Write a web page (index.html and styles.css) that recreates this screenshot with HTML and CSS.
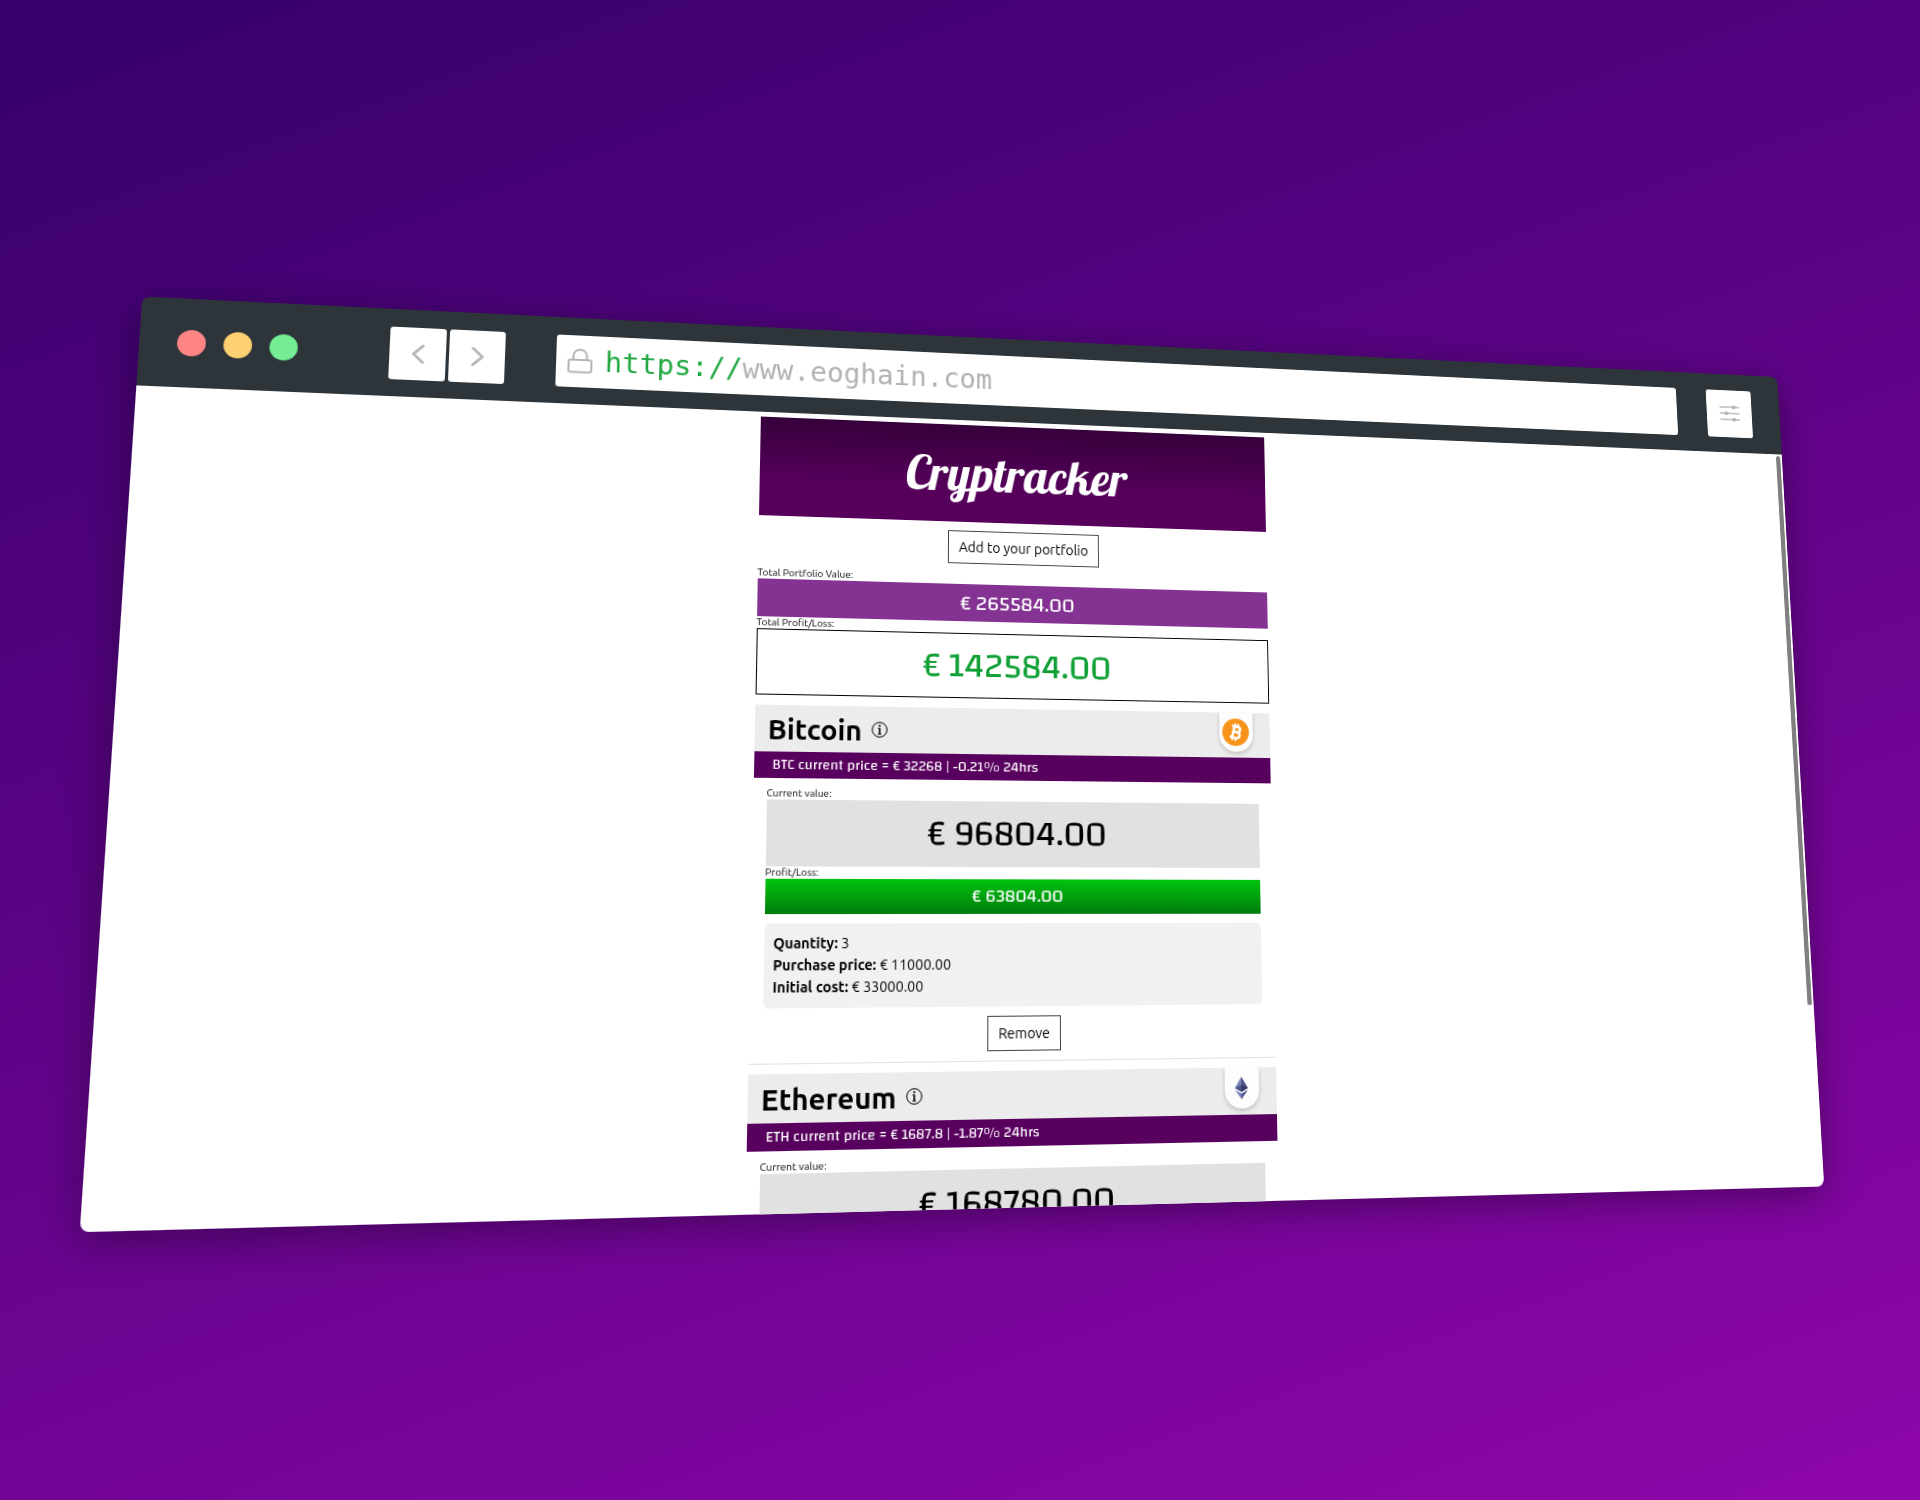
FILE: index.html
```html
<!DOCTYPE html>
<html lang="en">
<head>
<meta charset="utf-8">
<title>Cryptracker</title>
<link rel="stylesheet" href="styles.css">
</head>
<body>
<div class="browser">
  <div class="toolbar">
    <div class="lights">
      <span class="light light-close"></span>
      <span class="light light-min"></span>
      <span class="light light-max"></span>
    </div>
    <div class="nav">
      <button class="tool" type="button" aria-label="Back"><svg width="12" height="20" viewBox="0 0 12 20"><path d="M10.5 2 1.5 10.500l9 8.500"/></svg></button>
      <button class="tool" type="button" aria-label="Forward"><svg width="12" height="20" viewBox="0 0 12 20"><path d="M1.500 2l9 8.500-9 8.500"/></svg></button>
    </div>
    <label class="address">
      <svg class="lock" width="26" height="28" viewBox="0 0 26 28"><rect x="2" y="13" width="22" height="12.500" rx="2"/><path d="M6.500 13V9a6.500 6.500 0 0 1 13 0v4"/></svg>
      <span class="scheme">https://</span><input class="url" type="text" value="www.eoghain.com" aria-label="Address">
    </label>
    <button class="tool" type="button" aria-label="Settings"><svg class="sliders" width="24" height="18" viewBox="0 0 24 18"><path d="M1 2h22M1 9h22M1 16h22"/><path class="knob" d="M16.500 2h1M7.500 9h1M16.500 16h1"/></svg></button>
  </div>

  <div class="viewport">
    <main class="app">
      <header class="masthead"><h1 class="logo">Cryptracker</h1></header>
      <div class="actions"><button class="action" type="button">Add to your portfolio</button></div>

      <section class="totals">
        <p class="label">Total Portfolio Value:</p>
        <p class="amount amount-total">€ 265584.00</p>
        <p class="label">Total Profit/Loss:</p>
        <p class="amount amount-gain">€ 142584.00</p>
      </section>

      <section class="coin">
        <div class="coin-head">
          <h2 class="coin-name">Bitcoin</h2>
          <svg class="info" width="16" height="16" viewBox="0 0 16 16"><circle cx="8" cy="8" r="7.300"/><path class="stem" d="M8 6.300v6"/><path d="M6.300 6.600h1.500M6.300 12.200h3.400"/><circle class="dot" cx="8" cy="3.900" r="1"/></svg>
          <span class="badge"><svg width="28" height="28" viewBox="0 0 28 28"><circle cx="14" cy="14" r="14" fill="#f7931a"/><g transform="rotate(13 14 14)" fill="none" stroke="#fff"><path stroke-width="2.600" d="M11.500 8v12M9 8.200h6.300a2.700 2.700 0 0 1 0 5.500h-3.500 4a3 3 0 0 1 0 6.100H9"/><path stroke-width="1.800" d="M12 5v3M15.400 5v3M12 20v3M15.400 20v3"/></g></svg></span>
        </div>
        <p class="price">BTC current price = € 32268 | -0.21% 24hrs</p>
        <div class="holding">
          <p class="label">Current value:</p>
          <p class="amount amount-value">€ 96804.00</p>
          <p class="label">Profit/Loss:</p>
          <p class="amount amount-profit">€ 63804.00</p>
          <div class="details">
            <p><b>Quantity:</b> 3</p>
            <p><b>Purchase price:</b> € 11000.00</p>
            <p><b>Initial cost:</b> € 33000.00</p>
          </div>
        </div>
        <div class="actions"><button class="action" type="button">Remove</button></div>
      </section>

      <section class="coin">
        <div class="coin-head">
          <h2 class="coin-name">Ethereum</h2>
          <svg class="info" width="16" height="16" viewBox="0 0 16 16"><circle cx="8" cy="8" r="7.300"/><path class="stem" d="M8 6.300v6"/><path d="M6.300 6.600h1.500M6.300 12.200h3.400"/><circle class="dot" cx="8" cy="3.900" r="1"/></svg>
          <span class="badge"><svg width="28" height="28" viewBox="0 0 28 28"><path fill="#7480b8" d="M14 3v13.500L7.300 14z"/><path fill="#4c5488" d="M14 3v13.500l6.700-2.500z"/><path fill="#4c5488" d="M14 11v7l-6.700-4z"/><path fill="#343966" d="M14 11v7l6.700-4z"/><path fill="#7480b8" d="M14 19.500V25L7.300 15.800z"/><path fill="#4c5488" d="M14 19.500V25l6.700-9.200z"/></svg></span>
        </div>
        <p class="price">ETH current price = € 1687.8 | -1.87% 24hrs</p>
        <div class="holding">
          <p class="label">Current value:</p>
          <p class="amount amount-value">€ 168780.00</p>
        </div>
      </section>
    </main>
    <span class="thumb"></span>
  </div>
</div>
</body>
</html>
```
FILE: styles.css
```css
* { box-sizing: border-box; }

body {
  margin: 0;
  min-height: 100vh;
  display: flex;
  align-items: center;
  justify-content: center;
  overflow: hidden;
  background: linear-gradient(160deg, #36006a, #8e06aa);
  font-family: Ubuntu, "Noto Sans", sans-serif;
  font-size: 14px;
  color: #000;
}

h1, h2, p { margin: 0; }

button, input { font: inherit; }

/* The whole window leans back in perspective */
.browser {
  display: flex;
  flex-direction: column;
  width: calc(100% - 224px);
  height: 58vh;
  border-radius: 8px;
  box-shadow: 0 8px 40px rgba(0, 0, 0, 0.4);
  transform-origin: 0 0;
  transform: matrix3d(
    1.113331, 0.053026, 0, 0.000089693,
    -0.069464, 1.004966, 0, -0.000076924,
    0, 0, 1, 0,
    30.3, -18.5, 0, 1);
}

.toolbar {
  display: flex;
  flex: none;
  align-items: center;
  gap: 35px;
  height: 88px;
  padding: 0 33px 0 34px;
  border-radius: 8px 8px 0 0;
  background: #2d353a;
}

.lights {
  display: flex;
  gap: 16px;
  width: 160px;
}

.light {
  width: 26px;
  height: 26px;
  border-radius: 50%;
}

.light-close { background: #ff8585; }
.light-min { background: #ffd071; }
.light-max { background: #74ed94; }

.nav {
  display: flex;
  gap: 3px;
  margin-right: 14px;
}

.tool {
  display: flex;
  align-items: center;
  justify-content: center;
  width: 53px;
  height: 53px;
  padding: 0;
  border: 0;
  border-radius: 3px;
  background: #fff;
}

.tool svg {
  fill: none;
  stroke: #b4b4b4;
  stroke-width: 2.5;
  stroke-linecap: round;
  stroke-linejoin: round;
}

.tool .sliders { stroke-width: 1.5; }
.tool .knob { stroke-width: 4; }

.address {
  display: flex;
  flex: 1;
  align-items: center;
  height: 53px;
  padding-left: 10px;
  border-radius: 3px;
  background: #fff;
  font-family: "DejaVu Sans Mono", monospace;
  font-size: 28px;
  color: #b2b2b2;
}

.lock {
  margin-right: 11px;
  fill: none;
  stroke: #b4b4b4;
  stroke-width: 2;
}

.scheme { color: #22a843; }

.url {
  flex: 1;
  min-width: 0;
  padding: 0;
  border: 0;
  outline: 0;
  background: none;
  color: inherit;
}

.viewport {
  position: relative;
  flex: 1;
  min-height: 0;
  padding-top: 5px;
  overflow: hidden;
  border-radius: 0 0 8px 8px;
  background: #fff;
}

.thumb {
  position: absolute;
  top: 2px;
  right: 2px;
  width: 5px;
  height: 76%;
  border-radius: 3px;
  background: #808080;
}

.app {
  width: 521px;
  margin: 0 auto;
}

.masthead {
  display: flex;
  align-items: center;
  justify-content: center;
  height: 101px;
  background: linear-gradient(#35003a, #56005b 65%, #56005b);
}

.logo {
  font: 49px Lobster, "Liberation Serif", serif;
  color: #fff;
}

.actions {
  display: flex;
  justify-content: center;
  padding: 9px 0 9px 13px;
}

.action {
  height: 34px;
  padding: 0 10px;
  border: 1px solid #444;
  background: #fff;
  color: #000;
}

.totals { margin-bottom: 10px; }

.label {
  font-size: 10px;
  line-height: 12px;
}

.amount {
  display: flex;
  align-items: center;
  justify-content: center;
  font-family: Changa, Roboto, sans-serif;
  line-height: 1;
}

.amount-total {
  height: 38px;
  background: #853393;
  font-size: 21px;
  color: #fff;
}

.amount-gain {
  height: 66px;
  border: 1px solid #000;
  font-size: 35px;
  color: #11a036;
}

.amount-value {
  height: 65px;
  background: #e1e1e1;
  font-size: 35px;
}

.amount-profit {
  height: 34px;
  background: linear-gradient(#00c40f, #007c0c);
  font-size: 18px;
  color: #fff;
}

.coin + .coin {
  padding-top: 9px;
  border-top: 1px solid #e1e1e1;
}

.coin-head {
  display: flex;
  align-items: center;
  gap: 9px;
  height: 46px;
  padding: 0 18px 0 13px;
  background: #ececec;
}

.coin-name {
  font: bold 28px Ubuntu, Roboto, sans-serif;
}

.info {
  fill: none;
  stroke: #000;
  stroke-width: 1;
}

.info .stem { stroke-width: 1.6; }
.info .dot { fill: #000; stroke: none; }

.badge {
  align-self: flex-start;
  display: flex;
  justify-content: center;
  width: 35px;
  height: 40px;
  margin-left: auto;
  padding-top: 6px;
  border-radius: 0 0 17px 17px;
  background: #fdfdfd;
  box-shadow: 0 2px 4px rgba(0, 0, 0, 0.2);
}

.price {
  padding-left: 18px;
  background: #58005e;
  font-family: Changa, Roboto, sans-serif;
  line-height: 26px;
  color: #fff;
}

.holding { padding: 9px 13px 0; }

.details {
  margin-top: 9px;
  padding: 9px;
  border-radius: 5px;
  background: #f1f1f1;
  line-height: 21px;
}
```
